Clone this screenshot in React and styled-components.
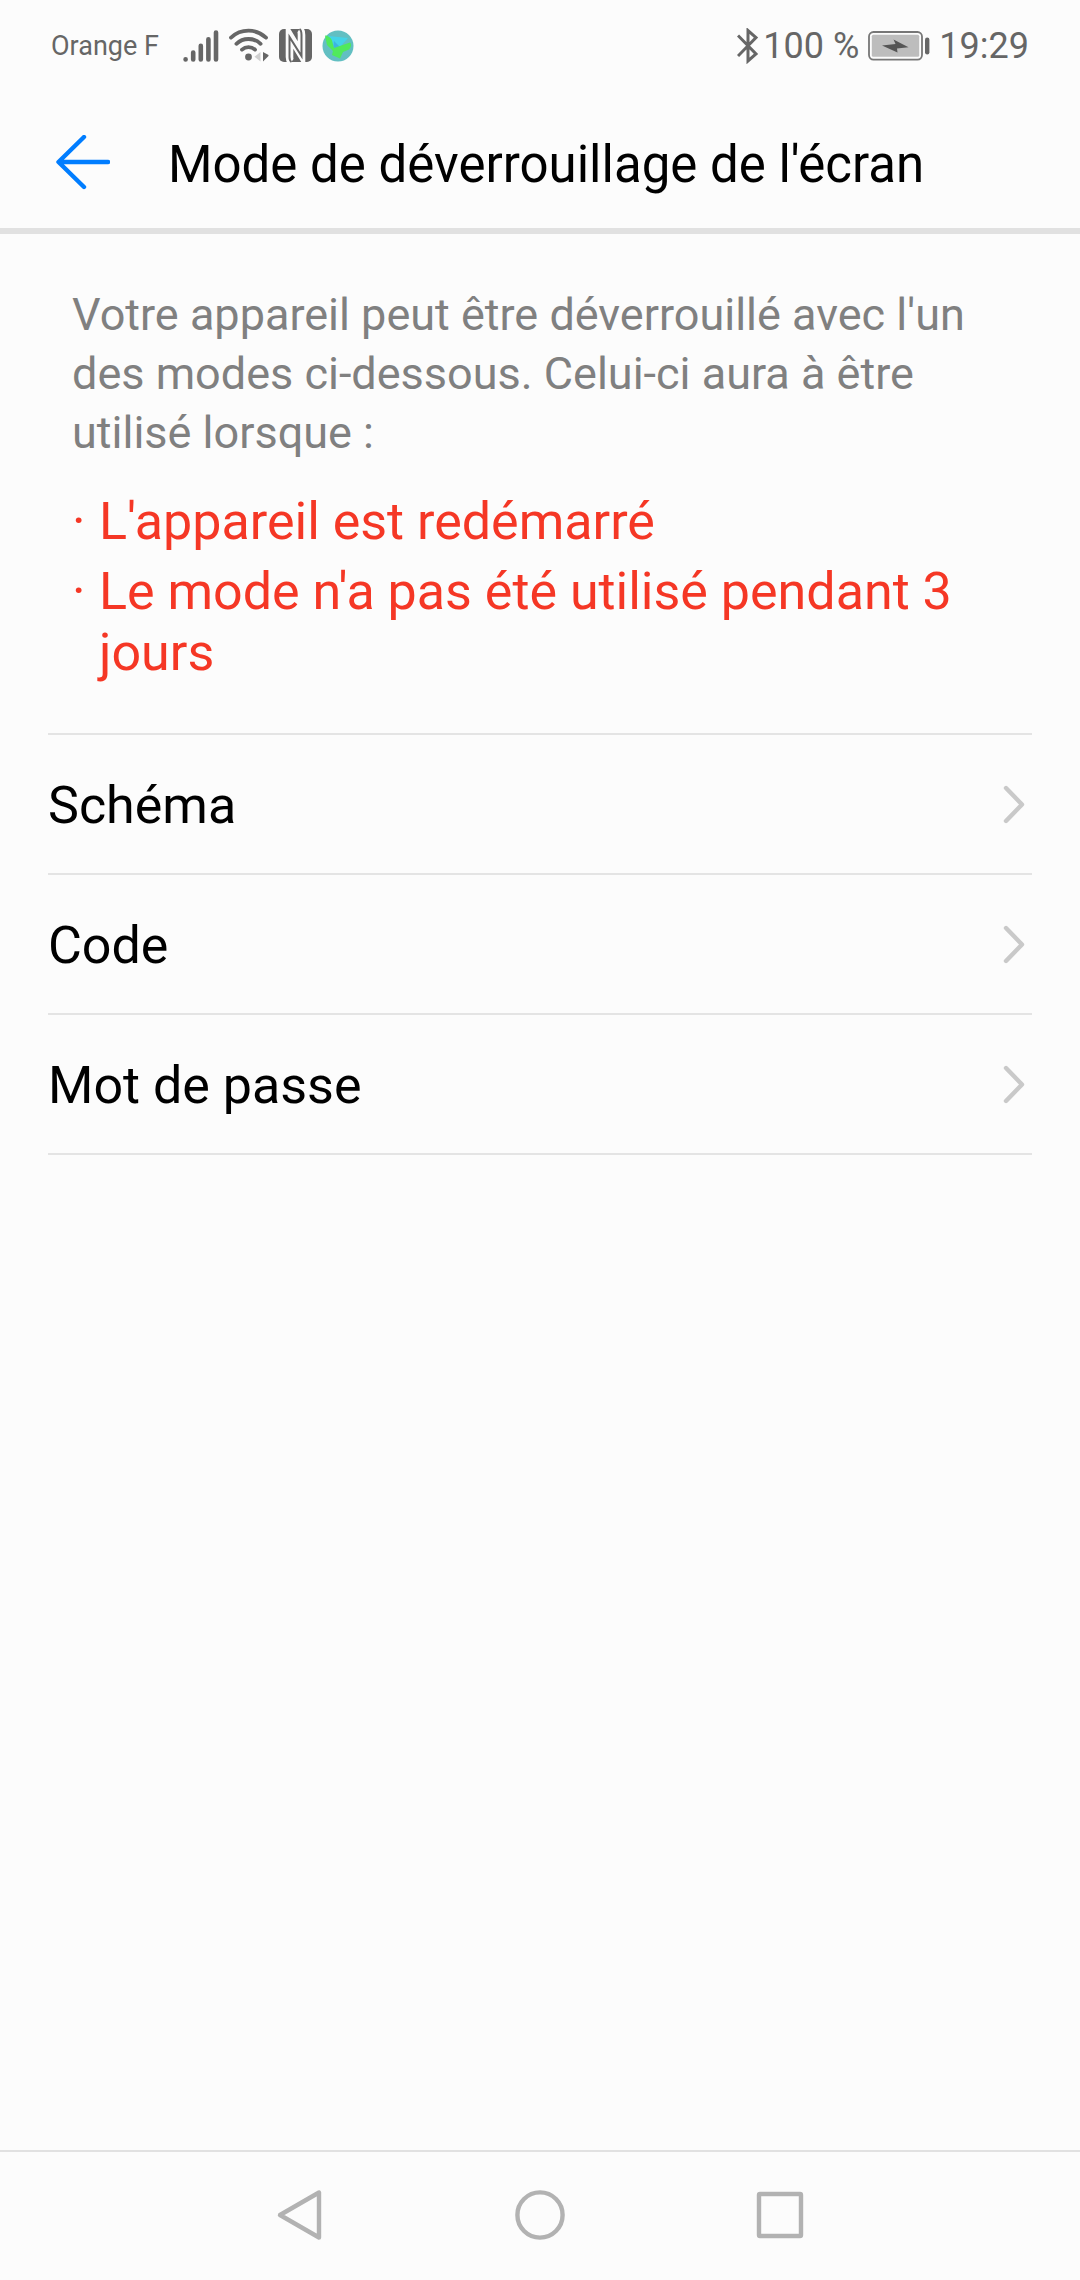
import React from 'react';
import styled, { createGlobalStyle } from 'styled-components';

const GlobalStyle = createGlobalStyle`
  * {
    box-sizing: border-box;
  }

  body {
    margin: 0;
    background-color: #fcfcfc;
    font-family: Roboto, 'Liberation Sans', sans-serif;
  }
`;

const Screen = styled.div`
  display: flex;
  flex-direction: column;
  min-height: 100vh;
`;

const StatusBar = styled.div`
  display: flex;
  justify-content: space-between;
  height: 92px;
  padding: 0 51px;
  color: #666;
`;

const StatusGroup = styled.div`
  display: flex;
  align-items: center;
  gap: ${(props) => props.$gap};
`;

const Carrier = styled.span`
  margin-right: 14px;
  font-size: 27px;
`;

const StatusText = styled.span`
  font-size: 36px;
  white-space: nowrap;
`;

const Icon = styled.svg`
  display: block;
  flex: none;
`;

const Header = styled.header`
  display: flex;
  align-items: center;
  gap: 58px;
  padding: 8px 56px 0;
  height: 142px;
  border-bottom: 6px solid #e1e1e1;
`;

const IconButton = styled.button`
  padding: 0;
  border: none;
  background: none;
  cursor: pointer;
`;

const Title = styled.h1`
  margin: 0;
  font-size: 51px;
  font-weight: 400;
  line-height: 61px;
  color: #000;
`;

const Main = styled.main`
  flex: 1;
  padding: 51px 48px;
`;

const Intro = styled.section`
  padding: 0 24px 50px;
`;

const Description = styled.p`
  margin: 0 0 29px;
  font-size: 45px;
  line-height: 59px;
  color: #808080;
`;

const Conditions = styled.ul`
  display: flex;
  flex-direction: column;
  gap: 9px;
  margin: 0;
  padding: 0;
  list-style: none;
  font-size: 52px;
  line-height: 61px;
  color: #f53725;
`;

const Condition = styled.li`
  display: flex;

  &::before {
    content: '·';
    flex: none;
    width: 27px;
  }
`;

const Options = styled.ul`
  margin: 0;
  padding: 0;
  list-style: none;
  border-top: 2px solid #e4e4e4;
`;

const Option = styled.a`
  display: flex;
  align-items: center;
  justify-content: space-between;
  height: 140px;
  padding: 3px 6px 0 0;
  border-bottom: 2px solid #e4e4e4;
  font-size: 52px;
  line-height: 61px;
  color: #000;
  text-decoration: none;
`;

const NavBar = styled.nav`
  display: flex;
  align-items: center;
  justify-content: center;
  gap: 188px;
  height: 130px;
  padding-bottom: 2px;
  border-top: 2px solid #e1e1e1;
`;

const SignalIcon = () => (
    <Icon width="36" height="36" viewBox="0 0 36 36" stroke="#666" strokeWidth="4.6" strokeLinecap="round">
        <path d="M2.6 31.2v.2M10.2 24.6v6.8M17.8 17.8v13.6M25.4 11.2v20.2M33 4.6v26.8" />
    </Icon>
);

const WifiIcon = () => (
    <Icon width="40" height="36" viewBox="0 0 40 36" fill="none" stroke="#666" strokeWidth="3.8" strokeLinecap="round">
        <path d="M2 9.6a25.6 25.6 0 0 1 35 0" />
        <path d="M7.4 15.8a17.6 17.6 0 0 1 24.2 0" />
        <path d="M13 21.6a9.6 9.6 0 0 1 13 0" />
        <circle cx="19.5" cy="29" r="3.4" fill="#666" stroke="none" />
        <path d="M31.5 24v9.5l-6-4.8z" fill="#d0d0d0" stroke="none" />
        <path d="M34 24v9.5l5.5-5.5v-1z" fill="#666" stroke="none" />
    </Icon>
);

const NfcIcon = () => (
    <Icon width="33" height="36" viewBox="0 0 33 36" fill="none">
        <rect y="1" width="33" height="33" rx="5" fill="#666" />
        <path d="M12.5 34c-1.5-1-2-2.500-2-5V7l12 20V7c0-3-.5-5-2-6" stroke="#fcfcfc" strokeWidth="7.6" />
        <path d="M12.5 34c-1.500-1-2-2.500-2-5V9l12 19V7c0-3-.5-5-2-6" stroke="#666" strokeWidth="2" />
    </Icon>
);

const AppIcon = () => (
    <Icon width="32" height="32" viewBox="0 0 32 32">
        <circle cx="16" cy="16" r="15.5" fill="#62bfc2" />
        <path d="M6 6l20 2-7 8-9 4z" fill="#43d3e8" />
        <path d="M12 11l7 7-8 2z" fill="#3db4e0" />
        <path d="M3 5.500c3 0 6 2 7 5l2 7.500 16-5.500c2 2 1 5-1 7l-6 2.500-3 6.500-8-3.500 1-4-6-6z" fill="#50e95c" />
    </Icon>
);

const BluetoothIcon = () => (
    <Icon width="24" height="36" viewBox="0 0 24 36" fill="none" stroke="#666" strokeWidth="3">
        <path d="M1 7.5l18 18.5-8 7V2.5l8 7L1 28" />
    </Icon>
);

const BatteryIcon = () => (
    <Icon width="62" height="30" viewBox="0 0 62 30">
        <rect x="1" y="1" width="53" height="27.6" rx="4.5" fill="none" stroke="#777" strokeWidth="1.8" />
        <rect x="3.8" y="3.8" width="47.4" height="22" rx="1.5" fill="#bdbdbd" />
        <path d="M14 14.500l13.500-1.500-2-4.500L40.500 16.200 29 17.500l.5 4z" fill="#555" />
        <rect x="57" y="6.5" width="4.4" height="17" rx="2.2" fill="#666" />
    </Icon>
);

const BackArrow = () => (
    <Icon width="54" height="58" viewBox="0 0 54 58" fill="none" stroke="#007dff" strokeWidth="4.4" strokeLinecap="round" strokeLinejoin="round">
        <path d="M28 2L2.5 27 28 52M3 27h49" />
    </Icon>
);

const Chevron = () => (
    <Icon width="24" height="44" viewBox="0 0 24 44" fill="none" stroke="#c9c9c9" strokeWidth="4.4" strokeLinecap="round" strokeLinejoin="round">
        <path d="M4 4L20 20.500 4 37" />
    </Icon>
);

const NavIcon = ({ children }) => (
    <Icon width="52" height="52" viewBox="0 0 52 52" fill="none" stroke="#b2b2b2" strokeWidth="4.4" strokeLinejoin="round">
        {children}
    </Icon>
);

const conditions = [
    "L'appareil est redémarré",
    "Le mode n'a pas été utilisé pendant 3 jours",
];

const options = [
    { label: 'Schéma', href: '#schema' },
    { label: 'Code', href: '#code' },
    { label: 'Mot de passe', href: '#mot-de-passe' },
];

const App = () => {
    return (
        <Screen>
            <GlobalStyle />
            <StatusBar>
                <StatusGroup $gap="10px">
                    <Carrier>Orange F</Carrier>
                    <SignalIcon />
                    <WifiIcon />
                    <NfcIcon />
                    <AppIcon />
                </StatusGroup>
                <StatusGroup $gap="9px">
                    <StatusGroup $gap="2px">
                        <BluetoothIcon />
                        <StatusText>100 %</StatusText>
                    </StatusGroup>
                    <BatteryIcon />
                    <StatusText>19:29</StatusText>
                </StatusGroup>
            </StatusBar>

            <Header>
                <IconButton type="button" aria-label="Retour">
                    <BackArrow />
                </IconButton>
                <Title>Mode de déverrouillage de l'écran</Title>
            </Header>

            <Main>
                <Intro>
                    <Description>
                        Votre appareil peut être déverrouillé avec l'un des modes ci-dessous. Celui-ci aura à être utilisé lorsque&nbsp;:
                    </Description>
                    <Conditions>
                        {conditions.map((text) => (
                            <Condition key={text}>{text}</Condition>
                        ))}
                    </Conditions>
                </Intro>

                <Options>
                    {options.map((option) => (
                        <li key={option.label}>
                            <Option href={option.href}>
                                {option.label}
                                <Chevron />
                            </Option>
                        </li>
                    ))}
                </Options>
            </Main>

            <NavBar>
                <IconButton type="button" aria-label="Précédent">
                    <NavIcon>
                        <path d="M45 3.500v45L6 26z" />
                    </NavIcon>
                </IconButton>
                <IconButton type="button" aria-label="Accueil">
                    <NavIcon>
                        <circle cx="26" cy="26" r="22.6" />
                    </NavIcon>
                </IconButton>
                <IconButton type="button" aria-label="Applications récentes">
                    <NavIcon>
                        <rect x="5" y="5" width="42" height="42" rx="1" />
                    </NavIcon>
                </IconButton>
            </NavBar>
        </Screen>
    );
};

export default App;
